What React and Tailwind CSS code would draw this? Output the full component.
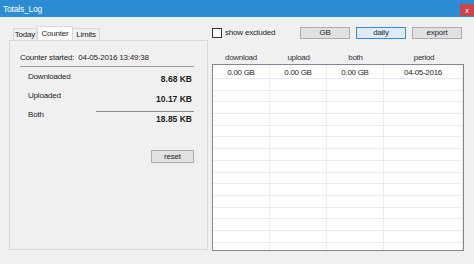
import React from 'react'

const font = { fontFamily: '"Liberation Sans", Arial, sans-serif' }

const rows = Array.from({ length: 16 })

function Btn({ children, active }) {
  return (
    <div
      className={
        'w-[50px] h-[12px] flex items-center justify-center leading-none text-[#1e1e1e] border ' +
        (active ? 'border-[#3c8ad0] bg-[#dcecfb]' : 'border-[#adadad] bg-[#e1e1e1]')
      }
    >
      {children}
    </div>
  )
}

export default function App() {
  return (
    <div
      className="w-[474px] h-[264px] bg-[#f0f0f0] overflow-hidden text-[8px] tracking-[-0.2px] whitespace-nowrap text-[#1e1e1e]"
      style={font}
    >
      <div className="h-[17px] bg-[#2b8bd3] flex items-start justify-between">
        <span className="pl-[3px] pt-[5px] text-white text-[8.5px] leading-none">Totals_Log</span>
        <div className="w-[14px] h-[12px] mt-[4px] bg-[#c8464b] text-white text-[7px] leading-none flex items-center justify-center">
          x
        </div>
      </div>

      <div className="flex">
        {/* left tabs */}
        <div className="pl-[9px] pt-[9px] w-[208px]">
          <div className="flex items-end h-[14px] pl-[4px] leading-none">
            <div className="h-[12px] w-[24px] border border-b-0 border-[#d9d9d9] flex items-center justify-center">Today</div>
            <div className="h-[14px] w-[36px] bg-white border border-b-0 border-[#d9d9d9] flex items-center justify-center">Counter</div>
            <div className="h-[12px] w-[27px] border border-b-0 border-l-0 border-[#d9d9d9] flex items-center justify-center">Limits</div>
          </div>
          <div className="h-[210px] w-[199px] border border-[#d9d9d9] pt-[12px] leading-[10px]">
            <div className="ml-[10px] mr-[13px] border-b border-[#a0a0a0] pb-[3px] h-[14px]">
              Counter started:&nbsp; 04-05-2016 13:49:38
            </div>
            <div className="ml-[18px] mr-[15px] mt-[5px] flex justify-between items-start">
              <span>Downloaded</span>
              <span className="font-bold text-[8.5px] tracking-normal mt-[2px]">8.68 KB</span>
            </div>
            <div className="ml-[18px] mr-[15px] mt-[7px] flex justify-between items-start">
              <span>Uploaded</span>
              <span className="font-bold text-[8.5px] tracking-normal mt-[3px]">10.17 KB</span>
            </div>
            <div className="ml-[86px] mr-[13px] mt-[7px] border-t border-[#8a8a8a]" />
            <div className="ml-[18px] mr-[15px] mt-[-2px] flex justify-between items-start">
              <span>Both</span>
              <span className="font-bold text-[8.5px] tracking-normal mt-[4px]">18.85 KB</span>
            </div>
            <div className="flex justify-end mr-[13px] mt-[26px]">
              <div className="w-[43px] h-[13px] bg-[#e1e1e1] border border-[#adadad] flex items-center justify-center">
                reset
              </div>
            </div>
          </div>
        </div>

        {/* right side */}
        <div className="pl-[4px] pt-[10px] w-[266px]">
          <div className="flex items-center h-[12px] leading-none">
            <div className="w-[10px] h-[10px] border border-[#333] bg-white" />
            <span className="ml-[3px] w-[75px]">show excluded</span>
            <div className="flex gap-[6px]">
              <Btn>GB</Btn>
              <Btn active>daily</Btn>
              <Btn>export</Btn>
            </div>
          </div>
          <div className="mt-[14px] grid grid-cols-[58px_57px_57px_80px] text-[8px] tracking-[-0.3px] leading-[10px] text-[#333] h-[10px]">
            <span className="text-center">download</span>
            <span className="text-center">upload</span>
            <span className="text-center">both</span>
            <span className="text-center">period</span>
          </div>
          <div className="mt-[1px] w-[252px] h-[187px] bg-white border border-[#828790] overflow-hidden text-[8px] tracking-[-0.3px] leading-none">
            {rows.map((_, i) => (
              <div
                key={i}
                className={
                  'grid grid-cols-[57px_57px_57px_79px] border-b border-[#ececec] ' +
                  (i === 0 ? 'h-[14px]' : 'h-[11.7px]')
                }
              >
                {['0.00 GB', '0.00 GB', '0.00 GB', '04-05-2016'].map((t, j) => (
                  <span key={j} className="text-center border-r border-[#ececec] pt-[4px]">
                    {i === 0 ? t : ''}
                  </span>
                ))}
              </div>
            ))}
          </div>
        </div>
      </div>
    </div>
  )
}
